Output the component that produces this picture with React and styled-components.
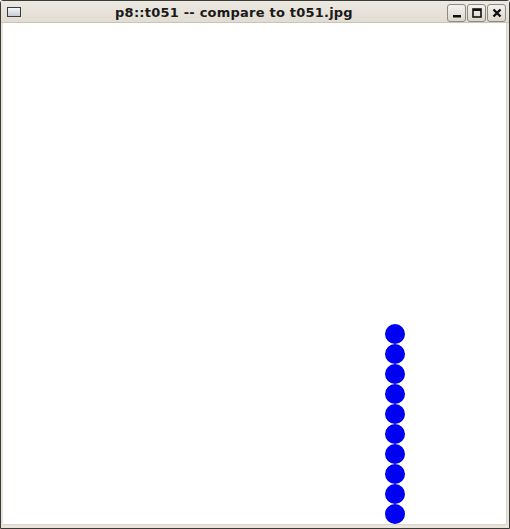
import React from "react";
import styled, { createGlobalStyle } from "styled-components";

const Global = createGlobalStyle`
  html, body { margin: 0; padding: 0; background: #ffffff; }
  body { width: 510px; height: 529px; overflow: hidden; }
`;

const Window = styled.div`
  box-sizing: border-box;
  width: 510px;
  height: 529px;
  display: flex;
  flex-direction: column;
  background: #e8e4dc;
  border: 1px solid #3a3a36;
  border-radius: 3px 3px 0 0;
`;

const TitleBar = styled.div`
  height: 21px;
  display: flex;
  align-items: center;
  padding: 0 3px 0 6px;
  background: linear-gradient(#ece9e2, #e2ddd3);
  border-bottom: 1px solid #c9c3b8;
`;

const WinIcon = styled.div`
  width: 12px;
  height: 8px;
  margin-top: 1px;
  border: 1px solid #3c3c3c;
  background: linear-gradient(#f6f6fa, #c8cad6);
`;

const Title = styled.div`
  flex: 1;
  text-align: center;
  font-family: "DejaVu Sans", sans-serif;
  font-weight: bold;
  font-size: 13px;
  letter-spacing: 0.22px;
  color: #1a1a1a;
  margin-top: 1px;
`;

const Buttons = styled.div`
  display: flex;
  gap: 1px;
  margin-top: 2px;
`;

const Btn = styled.div`
  box-sizing: border-box;
  width: 19px;
  height: 18px;
  border: 1px solid #8f8a80;
  border-radius: 3px;
  background: linear-gradient(#f4f2ee, #dcd7cd);
  display: flex;
  align-items: center;
  justify-content: center;
`;

const Body = styled.div`
  flex: 1;
  display: flex;
  padding: 0 2px 3px 2px;
`;

const Canvas = styled.div`
  flex: 1;
  background: #ffffff;
  display: flex;
  flex-direction: column;
  justify-content: flex-end;
  align-items: flex-start;
  padding-left: 382px;
  border-right: 1px solid #d8d4cc;
  border-bottom: 1px solid #d8d4cc;
`;

const Dot = styled.div`
  width: 20px;
  height: 20px;
  border-radius: 50%;
  background: #0000f2;
  flex: none;
`;

export default function App() {
  const dots = Array.from({ length: 10 }, (_, i) => i);
  return (
    <>
      <Global />
      <Window>
        <TitleBar>
          <WinIcon />
          <Title>p8::t051 -- compare to t051.jpg</Title>
          <Buttons>
            <Btn>
              <svg width="10" height="10" viewBox="0 0 10 10">
                <rect x="1" y="7" width="8" height="2.5" fill="#111" />
              </svg>
            </Btn>
            <Btn>
              <svg width="10" height="10" viewBox="0 0 10 10">
                <rect x="1" y="1" width="8" height="8" fill="none" stroke="#111" strokeWidth="1.6" />
                <rect x="1" y="1" width="8" height="2" fill="#111" />
              </svg>
            </Btn>
            <Btn>
              <svg width="10" height="10" viewBox="0 0 10 10">
                <path d="M1.5 1.5 L8.5 8.5 M8.5 1.5 L1.5 8.5" stroke="#111" strokeWidth="2.4" />
              </svg>
            </Btn>
          </Buttons>
        </TitleBar>
        <Body>
          <Canvas>
            {dots.map((d) => (
              <Dot key={d} />
            ))}
          </Canvas>
        </Body>
      </Window>
    </>
  );
}
